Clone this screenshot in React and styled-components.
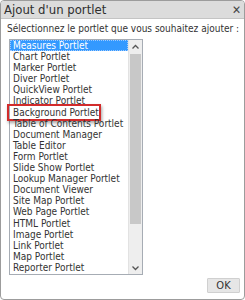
import React from "react";
import styled, { createGlobalStyle } from "styled-components";

const GlobalStyle = createGlobalStyle`
  html, body {
    margin: 0;
    padding: 0;
    background: #ffffff;
  }
`;

const FONT = `"DejaVu Sans Condensed", "DejaVu Sans", Verdana, sans-serif`;

const Dialog = styled.div`
  box-sizing: border-box;
  width: 245px;
  height: 300px;
  border: 1px solid #9c9c9c;
  border-radius: 4px;
  display: flex;
  flex-direction: column;
  overflow: hidden;
  font-family: ${FONT};
  font-stretch: condensed;
  color: #333;
  background: #fff;
`;

const TitleBar = styled.div`
  height: 17px;
  display: flex;
  align-items: center;
  justify-content: space-between;
  padding: 0 3px 0 3px;
  background: #dcdcdc;
  border-bottom: 1px solid #c4c4c4;
  font-size: 13px;
  color: #2f2f2f;
`;

const CloseButton = styled.span`
  font-family: "DejaVu Sans", sans-serif;
  font-size: 12px;
  font-weight: bold;
  color: #444;
  line-height: 1;
`;

const Body = styled.div`
  flex: 1;
  display: flex;
  flex-direction: column;
  padding: 4px 6px 0 6px;
`;

const Prompt = styled.div`
  font-size: 10px;
  line-height: 12px;
  white-space: nowrap;
  margin-bottom: 4px;
`;

const ListBox = styled.div`
  box-sizing: border-box;
  margin-left: 2px;
  width: 134px;
  height: 236px;
  border: 1px solid #a6acb4;
  display: flex;
`;

const Items = styled.ul`
  flex: 1;
  list-style: none;
  margin: 0;
  padding: 0;
  font-size: 10px;
`;

const Item = styled.li`
  position: relative;
  height: 11.1px;
  line-height: 11.1px;
  padding-left: 3px;
  white-space: nowrap;
  color: ${(p) => (p.selected ? "#fff" : "#333")};
  background: ${(p) => (p.selected ? "#3399ff" : "transparent")};
  outline: ${(p) => (p.selected ? "1px dotted #9fcaff" : "none")};
  outline-offset: -1px;
`;

const Highlight = styled.span`
  position: absolute;
  left: -3px;
  top: -3px;
  width: 90px;
  height: 13px;
  border: 2px solid #d22b2b;
  box-shadow: 1px 2px 3px rgba(0, 0, 0, 0.35);
  pointer-events: none;
`;

const ScrollBar = styled.div`
  width: 13px;
  display: flex;
  flex-direction: column;
  align-items: center;
  background: #eeeeee;
  border-left: 1px solid #e2e2e2;
`;

const Arrow = styled.div`
  height: 12px;
  display: flex;
  align-items: center;
  justify-content: center;
  color: #555;
`;

const Thumb = styled.div`
  width: 11px;
  height: 170px;
  background: #c8c8c8;
  margin-top: 2px;
`;

const Spacer = styled.div`
  flex: 1;
`;

const Footer = styled.div`
  display: flex;
  justify-content: flex-end;
  padding: 0 4px 6px 0;
`;

const OkButton = styled.button`
  font-family: ${FONT};
  font-stretch: condensed;
  font-size: 11px;
  color: #333;
  width: 33px;
  height: 15px;
  padding: 0;
  background: #e6e6e6;
  border: 1px solid #d0d0d0;
  border-radius: 1px;
`;

const portlets = [
  "Measures Portlet",
  "Chart Portlet",
  "Marker Portlet",
  "Diver Portlet",
  "QuickView Portlet",
  "Indicator Portlet",
  "Background Portlet",
  "Table of Contents Portlet",
  "Document Manager",
  "Table Editor",
  "Form Portlet",
  "Slide Show Portlet",
  "Lookup Manager Portlet",
  "Document Viewer",
  "Site Map Portlet",
  "Web Page Portlet",
  "HTML Portlet",
  "Image Portlet",
  "Link Portlet",
  "Map Portlet",
  "Reporter Portlet",
];

function Chevron({ up }) {
  return (
    <svg width="7" height="5" viewBox="0 0 7 5">
      <path
        d={up ? "M0.5 4.5 L3.5 1.5 L6.5 4.5" : "M0.5 0.5 L3.5 3.5 L6.5 0.5"}
        fill="none"
        stroke="#555"
        strokeWidth="1.3"
      />
    </svg>
  );
}

export default function App() {
  return (
    <>
      <GlobalStyle />
      <Dialog>
        <TitleBar>
          <span>Ajout d'un portlet</span>
          <CloseButton>✕</CloseButton>
        </TitleBar>
        <Body>
          <Prompt>Sélectionnez le portlet que vous souhaitez ajouter :</Prompt>
          <ListBox>
            <Items>
              {portlets.map((name, i) => (
                <Item key={name} selected={i === 0}>
                  {name}
                  {name === "Background Portlet" && <Highlight />}
                </Item>
              ))}
            </Items>
            <ScrollBar>
              <Arrow>
                <Chevron up />
              </Arrow>
              <Thumb />
              <Spacer />
              <Arrow>
                <Chevron />
              </Arrow>
            </ScrollBar>
          </ListBox>
        </Body>
        <Footer>
          <OkButton>OK</OkButton>
        </Footer>
      </Dialog>
    </>
  );
}
